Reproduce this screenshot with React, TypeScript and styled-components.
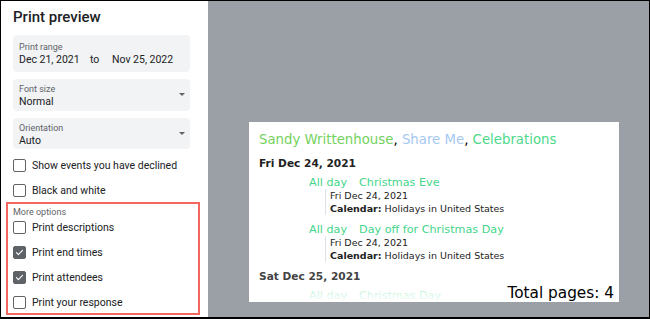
import React from "react";
import styled, { createGlobalStyle } from "styled-components";

const Global = createGlobalStyle`
  html, body { margin: 0; padding: 0; background: #fff; }
  * { box-sizing: border-box; }
`;

const Frame = styled.div`
  width: 650px;
  height: 319px;
  border: 1px solid #000;
  border-bottom-width: 2px;
  display: flex;
  overflow: hidden;
  font-family: Roboto, "Liberation Sans", sans-serif;
`;

const Sidebar = styled.div`
  width: 207px;
  flex: none;
  background: #fff;
  padding: 5px 18px 0 12px;
  display: flex;
  flex-direction: column;
`;

const Title = styled.h1`
  margin: 0;
  font-size: 15px;
  font-weight: 500;
  line-height: 22px;
  color: #202124;
`;

const Field = styled.div<{ $top: number; $pt: number; $pb: number }>`
  position: relative;
  margin-top: ${(p) => p.$top}px;
  background: #f1f3f4;
  border-radius: 4px;
  padding: ${(p) => p.$pt}px 6px ${(p) => p.$pb}px 6px;
`;

const Label = styled.div`
  font-size: 9px;
  line-height: 12px;
  color: #5f6368;
`;

const Value = styled.div`
  font-size: 10.5px;
  line-height: 14px;
  color: #202124;
  display: flex;
`;

const RangePart = styled.span<{ $w: number }>`
  width: ${(p) => p.$w}px;
`;

const Arrow = styled.span`
  position: absolute;
  right: 5px;
  top: 50%;
  margin-top: -2px;
  width: 0;
  height: 0;
  border-left: 3.5px solid transparent;
  border-right: 3.5px solid transparent;
  border-top: 3.5px solid #5f6368;
`;

const Rows = styled.div<{ $top: number }>`
  margin-top: ${(p) => p.$top}px;
  display: flex;
  flex-direction: column;
  gap: 5px;
`;

const Row = styled.label`
  height: 20px;
  display: flex;
  align-items: center;
  gap: 6px;
  font-size: 10.5px;
  color: #202124;
`;

const Box = styled.span<{ $checked?: boolean }>`
  width: 13px;
  height: 13px;
  flex: none;
  border-radius: 2px;
  border: 1.5px solid #5f6368;
  background: ${(p) => (p.$checked ? "#5f6368" : "#fff")};
  display: flex;
  align-items: center;
  justify-content: center;
`;

const Highlight = styled.div`
  margin: 2px -10px 0 -7px;
  border: 2px solid #f4675c;
  padding: 3px 5px 0 5px;
  height: 113px;
  display: flex;
  flex-direction: column;
`;

const MoreLabel = styled.div`
  font-size: 9px;
  line-height: 10px;
  color: #5f6368;
`;

const Stage = styled.div`
  flex: 1;
  background: #9aa0a6;
  padding: 121px 0 0 41px;
`;

const Page = styled.div`
  position: relative;
  width: 370px;
  height: 180px;
  background: #fff;
  overflow: hidden;
  padding: 9px 10px 0 10px;
  font-family: "DejaVu Sans", sans-serif;
  &::after {
    content: "";
    position: absolute;
    left: 0;
    right: 0;
    bottom: 0;
    height: 16px;
    background: linear-gradient(rgba(255, 255, 255, 0.6), rgba(255, 255, 255, 0.95));
  }
`;

const Calendars = styled.div`
  font-size: 13.3px;
  line-height: 17px;
  color: #000;
  white-space: nowrap;
`;

const Cal = styled.span<{ $c: string }>`
  color: ${(p) => p.$c};
`;

const DateHead = styled.div<{ $top: number; $c: string }>`
  margin-top: ${(p) => p.$top}px;
  font-size: 10.6px;
  font-weight: bold;
  line-height: 14px;
  color: ${(p) => p.$c};
  white-space: nowrap;
`;

const Event = styled.div<{ $top: number }>`
  margin-top: ${(p) => p.$top}px;
  margin-left: 50px;
  font-size: 11.2px;
  line-height: 12px;
  color: #45d68b;
  display: flex;
  gap: 12px;
  white-space: nowrap;
`;

const Details = styled.div`
  margin-left: 66px;
  border-left: 1.5px solid #dde1ea;
  padding-left: 4px;
  font-size: 9.5px;
  line-height: 13px;
  color: #222;
  white-space: nowrap;
`;

const Strong = styled.b`
  font-weight: bold;
`;

const Total = styled.div`
  position: absolute;
  right: 5px;
  bottom: 0;
  z-index: 1;
  font-size: 15.3px;
  line-height: 18px;
  color: #000;
`;

const Check = () => (
  <svg width="9" height="9" viewBox="0 0 24 24" fill="none">
    <path d="M4 12.5l5 5L20 6.5" stroke="#fff" strokeWidth="3" strokeLinecap="round" strokeLinejoin="round" />
  </svg>
);

const Option = ({ label, checked }: { label: string; checked?: boolean }) => (
  <Row>
    <Box $checked={checked}>{checked && <Check />}</Box>
    {label}
  </Row>
);

export default function App() {
  return (
    <>
      <Global />
      <Frame>
        <Sidebar>
          <Title>Print preview</Title>
          <Field $top={7} $pt={6} $pb={5}>
            <Label>Print range</Label>
            <Value>
              <RangePart $w={71}>Dec 21, 2021</RangePart>
              <RangePart $w={22}>to</RangePart>
              <span>Nov 25, 2022</span>
            </Value>
          </Field>
          <Field $top={7} $pt={4} $pb={2}>
            <Label>Font size</Label>
            <Value>Normal</Value>
            <Arrow />
          </Field>
          <Field $top={7} $pt={4} $pb={1}>
            <Label>Orientation</Label>
            <Value>Auto</Value>
            <Arrow />
          </Field>
          <Rows $top={6}>
            <Option label="Show events you have declined" />
            <Option label="Black and white" />
          </Rows>
          <Highlight>
            <MoreLabel>More options</MoreLabel>
            <Rows $top={0}>
              <Option label="Print descriptions" />
              <Option label="Print end times" checked />
              <Option label="Print attendees" checked />
              <Option label="Print your response" />
            </Rows>
          </Highlight>
        </Sidebar>
        <Stage>
          <Page>
            <Calendars>
              <Cal $c="#74d25e">Sandy Writtenhouse</Cal>, <Cal $c="#a6c8ef">Share Me</Cal>,{" "}
              <Cal $c="#4dd98a">Celebrations</Cal>
            </Calendars>
            <DateHead $top={8} $c="#222">Fri Dec 24, 2021</DateHead>
            <Event $top={7}>
              <span>All day</span>
              <span>Christmas Eve</span>
            </Event>
            <Details>
              <div>Fri Dec 24, 2021</div>
              <div>
                <Strong>Calendar:</Strong> Holidays in United States
              </div>
            </Details>
            <Event $top={9}>
              <span>All day</span>
              <span>Day off for Christmas Day</span>
            </Event>
            <Details>
              <div>Fri Dec 24, 2021</div>
              <div>
                <Strong>Calendar:</Strong> Holidays in United States
              </div>
            </Details>
            <DateHead $top={7} $c="#444">Sat Dec 25, 2021</DateHead>
            <Event $top={7}>
              <span>All day</span>
              <span>Christmas Day</span>
            </Event>
            <Total>Total pages: 4</Total>
          </Page>
        </Stage>
      </Frame>
    </>
  );
}
